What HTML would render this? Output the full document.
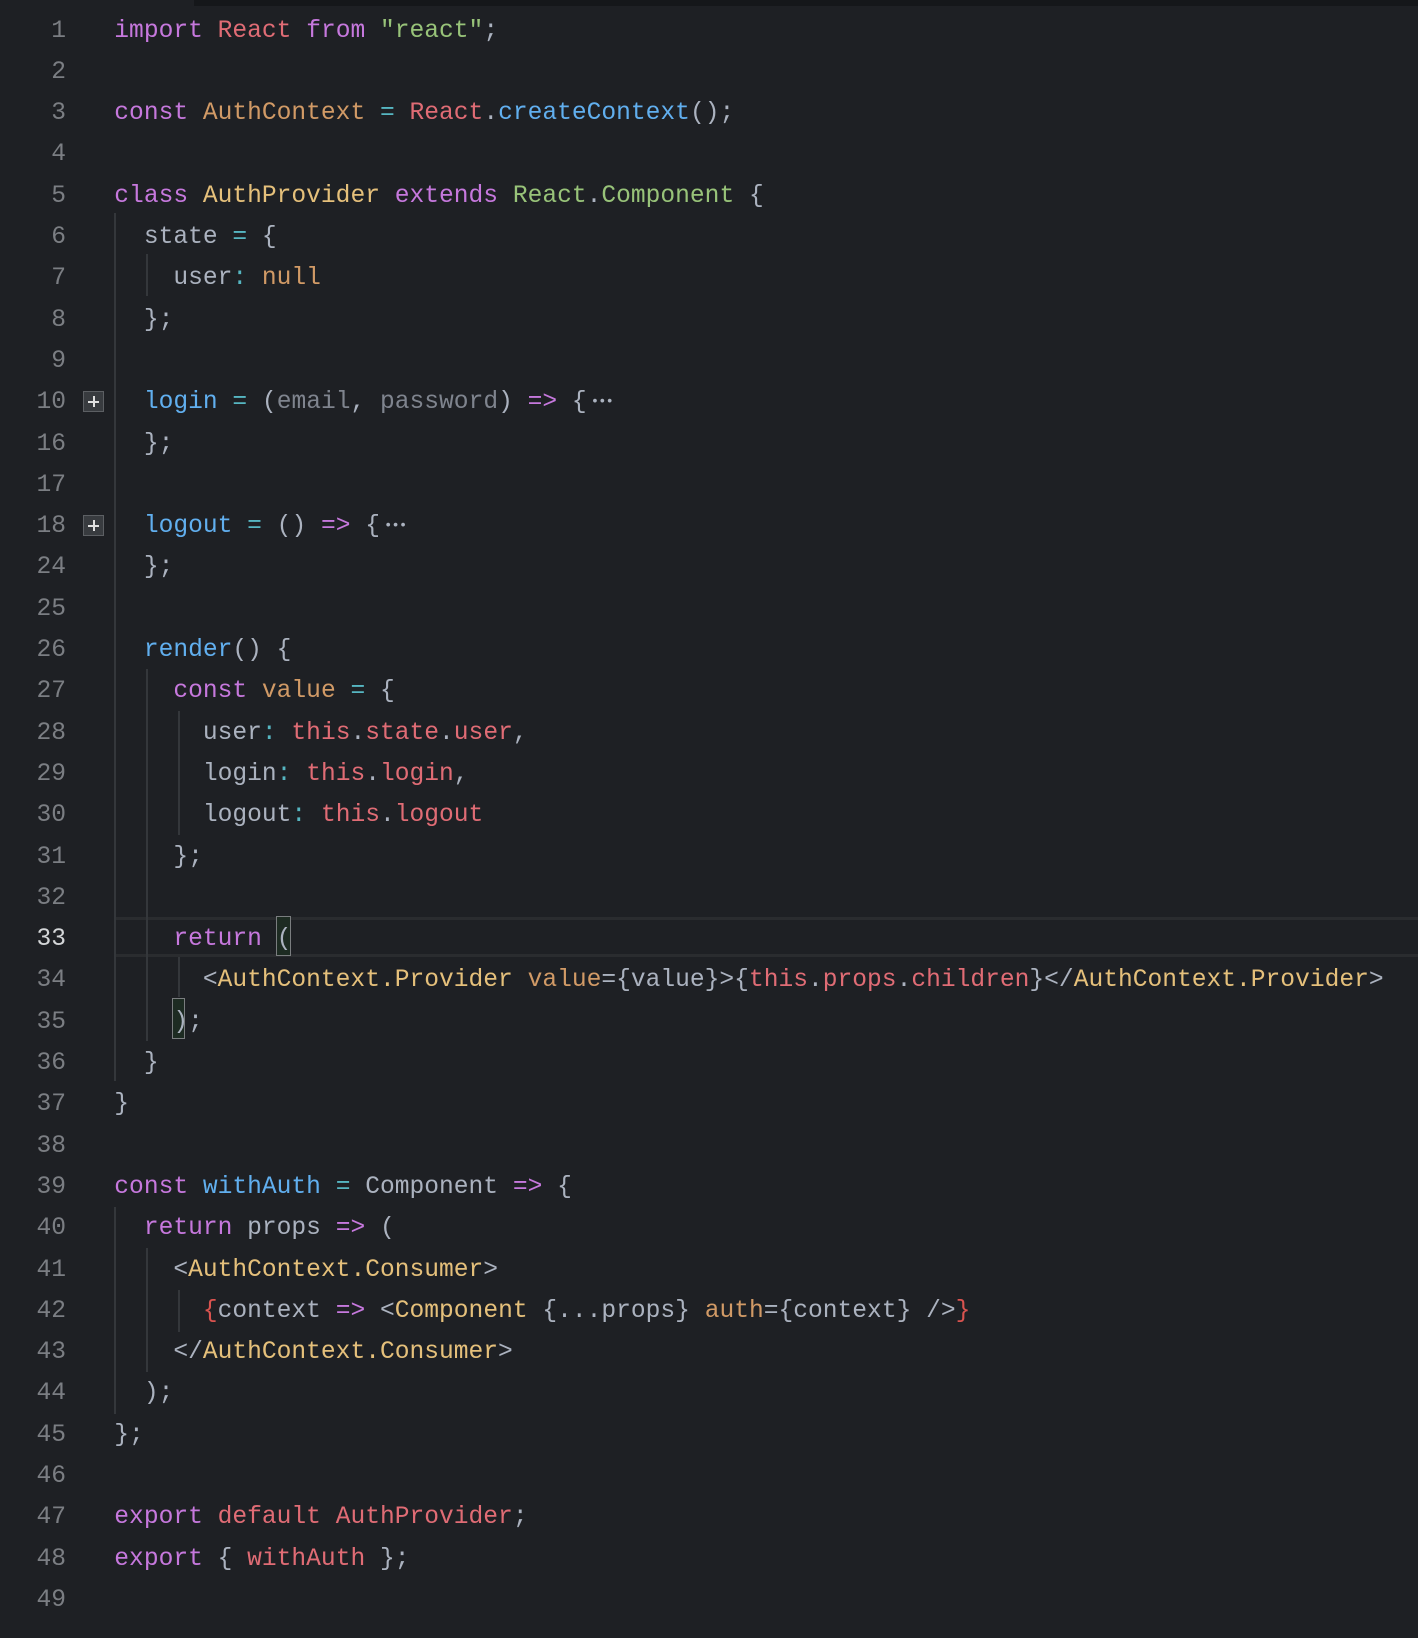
<!DOCTYPE html>
<html><head><meta charset="utf-8"><style>
html,body{margin:0;padding:0;}
body{width:1418px;height:1638px;background:#1e2024;position:relative;overflow:hidden;font-family:"Liberation Mono",monospace;font-size:24.6px;}
#w{position:absolute;left:0;top:3.5px;width:1418px;height:1630px;}
.r{position:absolute;left:0;height:41.3px;line-height:41.3px;width:1418px;}
.n{position:absolute;right:1352px;color:#7b7e83;text-align:right;}
.c{position:absolute;left:114.3px;white-space:pre;color:#abb2bf;}
.g{position:absolute;width:2px;background:#34373b;}
.k{color:#c678dd}.rd{color:#e06c75}.o{color:#d19a66}.y{color:#e5c07b}.gr{color:#98c379}.b{color:#61afef}.cy{color:#56b6c2}.p{color:#7f848e}.d{color:#abb2bf}
.fold{position:absolute;left:83px;width:19px;height:19px;border:1.5px solid #5c5f63;background:#383b3f;}
.fold:before{content:"";position:absolute;left:4px;top:8.5px;width:11px;height:2px;background:#e0e0e0;}
.fold:after{content:"";position:absolute;left:8.5px;top:4px;width:2px;height:11px;background:#e0e0e0;}
.el{font-size:14px;vertical-align:top;letter-spacing:-1px;color:#abb2bf;margin-left:4px;}
</style></head><body>
<div style="position:absolute;left:194px;top:0;width:1224px;height:6px;background:#15171a"></div>
<div style="position:absolute;left:114px;top:917px;width:1304px;height:3px;background:#2a2c2f"></div>
<div style="position:absolute;left:114px;top:954px;width:1304px;height:3px;background:#2a2c2f"></div>
<div style="position:absolute;left:276px;top:916px;width:13px;height:38px;border:1.5px solid #7a7d7f;background:#1d2b22"></div>
<div style="position:absolute;left:172px;top:998px;width:11px;height:39px;border:1.5px solid #7a7d7f;background:#1d2b22"></div>
<div class="g" style="left:114px;top:213px;height:868px"></div>
<div class="g" style="left:114px;top:1207px;height:207px"></div>
<div class="g" style="left:146px;top:254px;height:42px"></div>
<div class="g" style="left:146px;top:669px;height:372px"></div>
<div class="g" style="left:146px;top:1248px;height:124px"></div>
<div class="g" style="left:178px;top:711px;height:124px"></div>
<div class="g" style="left:178px;top:957px;height:40px"></div>
<div class="g" style="left:178px;top:1290px;height:42px"></div>
<div id="w">
<div class="r" style="top:7px"><span class="n">1</span><span class="c"><span class="k">import</span> <span class="rd">React</span> <span class="k">from</span> <span class="gr">"react"</span>;</span></div>
<div class="r" style="top:48.3px"><span class="n">2</span></div>
<div class="r" style="top:89.6px"><span class="n">3</span><span class="c"><span class="k">const</span> <span class="o">AuthContext</span> <span class="cy">=</span> <span class="rd">React</span>.<span class="b">createContext</span>();</span></div>
<div class="r" style="top:130.9px"><span class="n">4</span></div>
<div class="r" style="top:172.2px"><span class="n">5</span><span class="c"><span class="k">class</span> <span class="y">AuthProvider</span> <span class="k">extends</span> <span class="gr">React</span>.<span class="gr">Component</span> {</span></div>
<div class="r" style="top:213.5px"><span class="n">6</span><span class="c">  state <span class="cy">=</span> {</span></div>
<div class="r" style="top:254.8px"><span class="n">7</span><span class="c">    user<span class="cy">:</span> <span class="o">null</span></span></div>
<div class="r" style="top:296.1px"><span class="n">8</span><span class="c">  };</span></div>
<div class="r" style="top:337.4px"><span class="n">9</span></div>
<div class="r" style="top:378.7px"><span class="n">10</span><span class="fold" style="top:9px"></span><span class="c">  <span class="b">login</span> <span class="cy">=</span> (<span class="p">email</span>, <span class="p">password</span>) <span class="k">=&gt;</span> {<span class="el">•••</span></span></div>
<div class="r" style="top:420px"><span class="n">16</span><span class="c">  };</span></div>
<div class="r" style="top:461.3px"><span class="n">17</span></div>
<div class="r" style="top:502.6px"><span class="n">18</span><span class="fold" style="top:9px"></span><span class="c">  <span class="b">logout</span> <span class="cy">=</span> () <span class="k">=&gt;</span> {<span class="el">•••</span></span></div>
<div class="r" style="top:543.9px"><span class="n">24</span><span class="c">  };</span></div>
<div class="r" style="top:585.2px"><span class="n">25</span></div>
<div class="r" style="top:626.5px"><span class="n">26</span><span class="c">  <span class="b">render</span>() {</span></div>
<div class="r" style="top:667.8px"><span class="n">27</span><span class="c">    <span class="k">const</span> <span class="o">value</span> <span class="cy">=</span> {</span></div>
<div class="r" style="top:709.1px"><span class="n">28</span><span class="c">      user<span class="cy">:</span> <span class="rd">this</span>.<span class="rd">state</span>.<span class="rd">user</span>,</span></div>
<div class="r" style="top:750.4px"><span class="n">29</span><span class="c">      login<span class="cy">:</span> <span class="rd">this</span>.<span class="rd">login</span>,</span></div>
<div class="r" style="top:791.7px"><span class="n">30</span><span class="c">      logout<span class="cy">:</span> <span class="rd">this</span>.<span class="rd">logout</span></span></div>
<div class="r" style="top:833px"><span class="n">31</span><span class="c">    };</span></div>
<div class="r" style="top:874.3px"><span class="n">32</span></div>
<div class="r" style="top:915.6px"><span class="n" style="color:#d4d6d8">33</span><span class="c">    <span class="k">return</span> (</span></div>
<div class="r" style="top:956.9px"><span class="n">34</span><span class="c">      &lt;<span class="y">AuthContext.Provider</span> <span class="o">value</span>={value}&gt;{<span class="rd">this</span>.<span class="rd">props</span>.<span class="rd">children</span>}&lt;/<span class="y">AuthContext.Provider</span>&gt;</span></div>
<div class="r" style="top:998.2px"><span class="n">35</span><span class="c">    );</span></div>
<div class="r" style="top:1039.5px"><span class="n">36</span><span class="c">  }</span></div>
<div class="r" style="top:1080.8px"><span class="n">37</span><span class="c">}</span></div>
<div class="r" style="top:1122.1px"><span class="n">38</span></div>
<div class="r" style="top:1163.4px"><span class="n">39</span><span class="c"><span class="k">const</span> <span class="b">withAuth</span> <span class="cy">=</span> Component <span class="k">=&gt;</span> {</span></div>
<div class="r" style="top:1204.7px"><span class="n">40</span><span class="c">  <span class="k">return</span> props <span class="k">=&gt;</span> (</span></div>
<div class="r" style="top:1246px"><span class="n">41</span><span class="c">    &lt;<span class="y">AuthContext.Consumer</span>&gt;</span></div>
<div class="r" style="top:1287.3px"><span class="n">42</span><span class="c">      <span style="color:#d9534f">{</span>context <span class="k">=&gt;</span> &lt;<span class="y">Component</span> {...props} <span class="o">auth</span>={context} /&gt;<span style="color:#d9534f">}</span></span></div>
<div class="r" style="top:1328.6px"><span class="n">43</span><span class="c">    &lt;/<span class="y">AuthContext.Consumer</span>&gt;</span></div>
<div class="r" style="top:1369.9px"><span class="n">44</span><span class="c">  );</span></div>
<div class="r" style="top:1411.2px"><span class="n">45</span><span class="c">};</span></div>
<div class="r" style="top:1452.5px"><span class="n">46</span></div>
<div class="r" style="top:1493.8px"><span class="n">47</span><span class="c"><span class="k">export</span> <span class="rd">default</span> <span class="rd">AuthProvider</span>;</span></div>
<div class="r" style="top:1535.1px"><span class="n">48</span><span class="c"><span class="k">export</span> { <span class="rd">withAuth</span> };</span></div>
<div class="r" style="top:1576.4px"><span class="n">49</span></div>
</div>
</body></html>
